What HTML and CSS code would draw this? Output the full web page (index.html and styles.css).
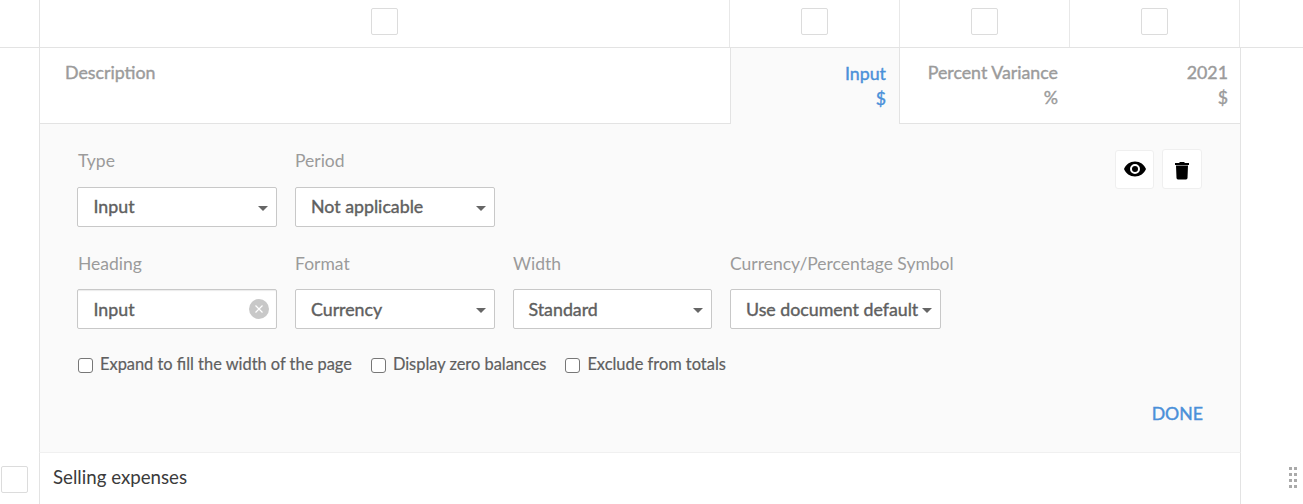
FILE: index.html
```html
<!DOCTYPE html>
<html lang="en">
<head>
<meta charset="utf-8">
<title>Column settings</title>
<link rel="stylesheet" href="styles.css">
</head>
<body>
<div class="sheet">
  <div class="top-row">
    <div class="top-cell desc"><span class="box"></span></div>
    <div class="top-cell num"><span class="box"></span></div>
    <div class="top-cell num"><span class="box"></span></div>
    <div class="top-cell num"><span class="box"></span></div>
  </div>
  <div class="head-row">
    <div class="head-desc">Description</div>
    <div class="head-input"><span>Input</span><span>$</span></div>
    <div class="head-pct"><span>Percent Variance</span><span>%</span></div>
    <div class="head-year"><span>2021</span><span>$</span></div>
  </div>
  <div class="panel">
    <div class="actions">
      <button class="icon-btn eye" aria-label="Show">
        <svg width="24" height="24" viewBox="0 0 24 24"><path d="M12 4.500C7 4.500 2.700 7.600 1 12c1.700 4.400 6 7.500 11 7.500s9.300-3.100 11-7.500c-1.700-4.400-6-7.500-11-7.500zM12 17a5 5 0 1 1 0-10 5 5 0 0 1 0 10zm0-8a3 3 0 1 0 0 6 3 3 0 0 0 0-6z"/></svg>
      </button>
      <button class="icon-btn trash" aria-label="Delete">
        <svg width="24" height="24" viewBox="0 0 24 24"><path d="M5 6h4l1-1h4l1 1h4v2H5zM6 8.500h12l-.5 12.500a1.500 1.500 0 0 1-1.500 1.400H8a1.500 1.500 0 0 1-1.500-1.400z"/></svg>
      </button>
    </div>
    <div class="fields row-one">
      <div class="field first"><div class="label">Type</div><div class="select">Input<i class="caret"></i></div></div>
      <div class="field"><div class="label">Period</div><div class="select">Not applicable<i class="caret"></i></div></div>
    </div>
    <div class="fields row-two">
      <div class="field first"><div class="label">Heading</div><div class="select text-input">Input<span class="clear"><svg width="10" height="10" viewBox="0 0 10 10"><path d="M1.500 1.500l7 7M8.500 1.500l-7 7"/></svg></span></div></div>
      <div class="field"><div class="label">Format</div><div class="select">Currency<i class="caret"></i></div></div>
      <div class="field"><div class="label">Width</div><div class="select narrow">Standard<i class="caret"></i></div></div>
      <div class="field"><div class="label">Currency/Percentage Symbol</div><div class="select wide">Use document default<i class="caret"></i></div></div>
    </div>
    <div class="checks">
      <label class="check"><i class="tick"></i>Expand to fill the width of the page</label>
      <label class="check"><i class="tick"></i>Display zero balances</label>
      <label class="check"><i class="tick"></i>Exclude from totals</label>
    </div>
    <div class="done-row"><a class="done">DONE</a></div>
  </div>
  <div class="bottom-row">
    <div class="gutter"><span class="box"></span></div>
    <div class="row-text">Selling expenses</div>
    <div class="handle-col">
      <svg class="handle" width="8" height="22" viewBox="0 0 8 22"><path d="M0 0h3v3H0zM5 0h3v3H5zM0 6h3v3H0zM5 6h3v3H5zM0 12h3v3H0zM5 12h3v3H5zM0 18h3v3H0zM5 18h3v3H5z"/></svg>
    </div>
  </div>
</div>
</body>
</html>
```
FILE: styles.css
```css
* { box-sizing: border-box; }
html, body { margin: 0; padding: 0; background: #fff; }
body { font-family: Lato, "Open Sans", sans-serif; color: #5f5f5f; overflow: hidden; }
.sheet { width: 1303px; height: 504px; display: flex; flex-direction: column; }

.box { display: block; width: 27px; height: 27px; background: #fff; border: 1px solid #dcdcdc; border-radius: 2px; }

.top-row { display: flex; height: 48px; border-bottom: 1px solid #e3e3e3; padding-left: 39px; }
.top-cell { display: flex; justify-content: center; padding-top: 8px; border-right: 1px solid #e8e8e8; }
.top-cell.desc { width: 691px; border-left: 1px solid #e3e3e3; }
.top-cell.num { width: 170px; }

.head-row { display: flex; height: 76px; margin-left: 39px; width: 1202px; font-size: 17.800px; color: #9b9b9b; line-height: 25px; -webkit-text-stroke: 0.4px currentColor; }
.head-desc { width: 691px; padding: 12px 0 0 25px; border-left: 1px solid #e3e3e3; border-bottom: 1px solid #e3e3e3; }
.head-input, .head-pct, .head-year { display: flex; flex-direction: column; align-items: flex-end; padding-top: 12px; }
.head-input { width: 170px; padding-right: 13px; background: #fafafa; color: #4a90d9; border-left: 1px solid #e3e3e3; border-right: 1px solid #e3e3e3; padding-top: 13px; }
.head-pct { width: 170px; padding-right: 12px; border-bottom: 1px solid #e3e3e3; }
.head-year { width: 171px; padding-right: 12px; border-bottom: 1px solid #e3e3e3; border-right: 1px solid #e3e3e3; }

.panel { position: relative; height: 329px; margin-left: 39px; width: 1202px; background: #fafafa; border-left: 1px solid #e3e3e3; border-right: 1px solid #e3e3e3; border-bottom: 1px solid #f0f0f0; padding: 25px 37px 0; }

.fields { display: flex; gap: 18px; }
.row-one { height: 103px; }
.label { font-size: 17.500px; line-height: 24px; color: #9b9b9b; height: 38px; }
.first .label { padding-left: 1px; }
.row-two .label { height: 37px; }
.select { position: relative; width: 200px; height: 40px; background: #fff; border: 1px solid #c8c8c8; border-radius: 2px; padding-left: 15px; font-size: 17.800px; line-height: 37px; color: #5f5f5f; -webkit-text-stroke: 0.4px currentColor; }
.first .select { padding-left: 15.500px; }
.row-two .select { line-height: 39px; }
.select.narrow { width: 199px; padding-left: 14.500px; }
.select.wide { width: 211px; }
.caret { position: absolute; right: 8px; top: 18px; width: 0; height: 0; border-left: 5px solid transparent; border-right: 5px solid transparent; border-top: 5px solid #666; }
.text-input { box-shadow: inset 0 1px 1px rgba(0,0,0,.08); }
.clear { position: absolute; right: 7px; top: 9px; width: 20px; height: 20px; border-radius: 50%; background: #c8c8c8; display: flex; align-items: center; justify-content: center; }
.clear svg { fill: none; stroke: #fff; stroke-width: 1.200; }

.checks { display: flex; gap: 18px; margin-top: 23px; }
.check { display: flex; align-items: center; font-size: 16.400px; line-height: 24px; color: #5f5f5f; -webkit-text-stroke: 0.2px currentColor; }
.tick { display: block; width: 15px; height: 15px; margin: 2px 7px 0 1px; background: #fff; border: 1.500px solid #777; border-radius: 3px; }

.done-row { display: flex; justify-content: flex-end; margin-top: 26px; }
.done { font-size: 17.700px; line-height: 24px; color: #4a90d9; -webkit-text-stroke: 0.4px currentColor; }

.actions { position: absolute; top: 25px; right: 38px; display: flex; gap: 8px; align-items: center; }
.icon-btn { display: flex; align-items: center; justify-content: center; padding: 0; background: #fff; border: 1px solid #efefef; border-radius: 3px; }
.icon-btn.eye { width: 39px; height: 39px; }
.icon-btn.trash { width: 40px; height: 40px; }
.icon-btn svg { display: block; fill: #000; }

.bottom-row { display: flex; height: 51px; }
.gutter { width: 40px; padding: 13px 0 0 1px; border-right: 1px solid #e3e3e3; }
.row-text { width: 1201px; padding: 11px 0 0 13px; border-right: 1px solid #e3e3e3; font-size: 18.700px; line-height: 26px; color: #3b3b3b; }
.handle-col { flex: 1; padding: 14px 0 0 48px; }
.handle { display: block; fill: #aaa; }
```
